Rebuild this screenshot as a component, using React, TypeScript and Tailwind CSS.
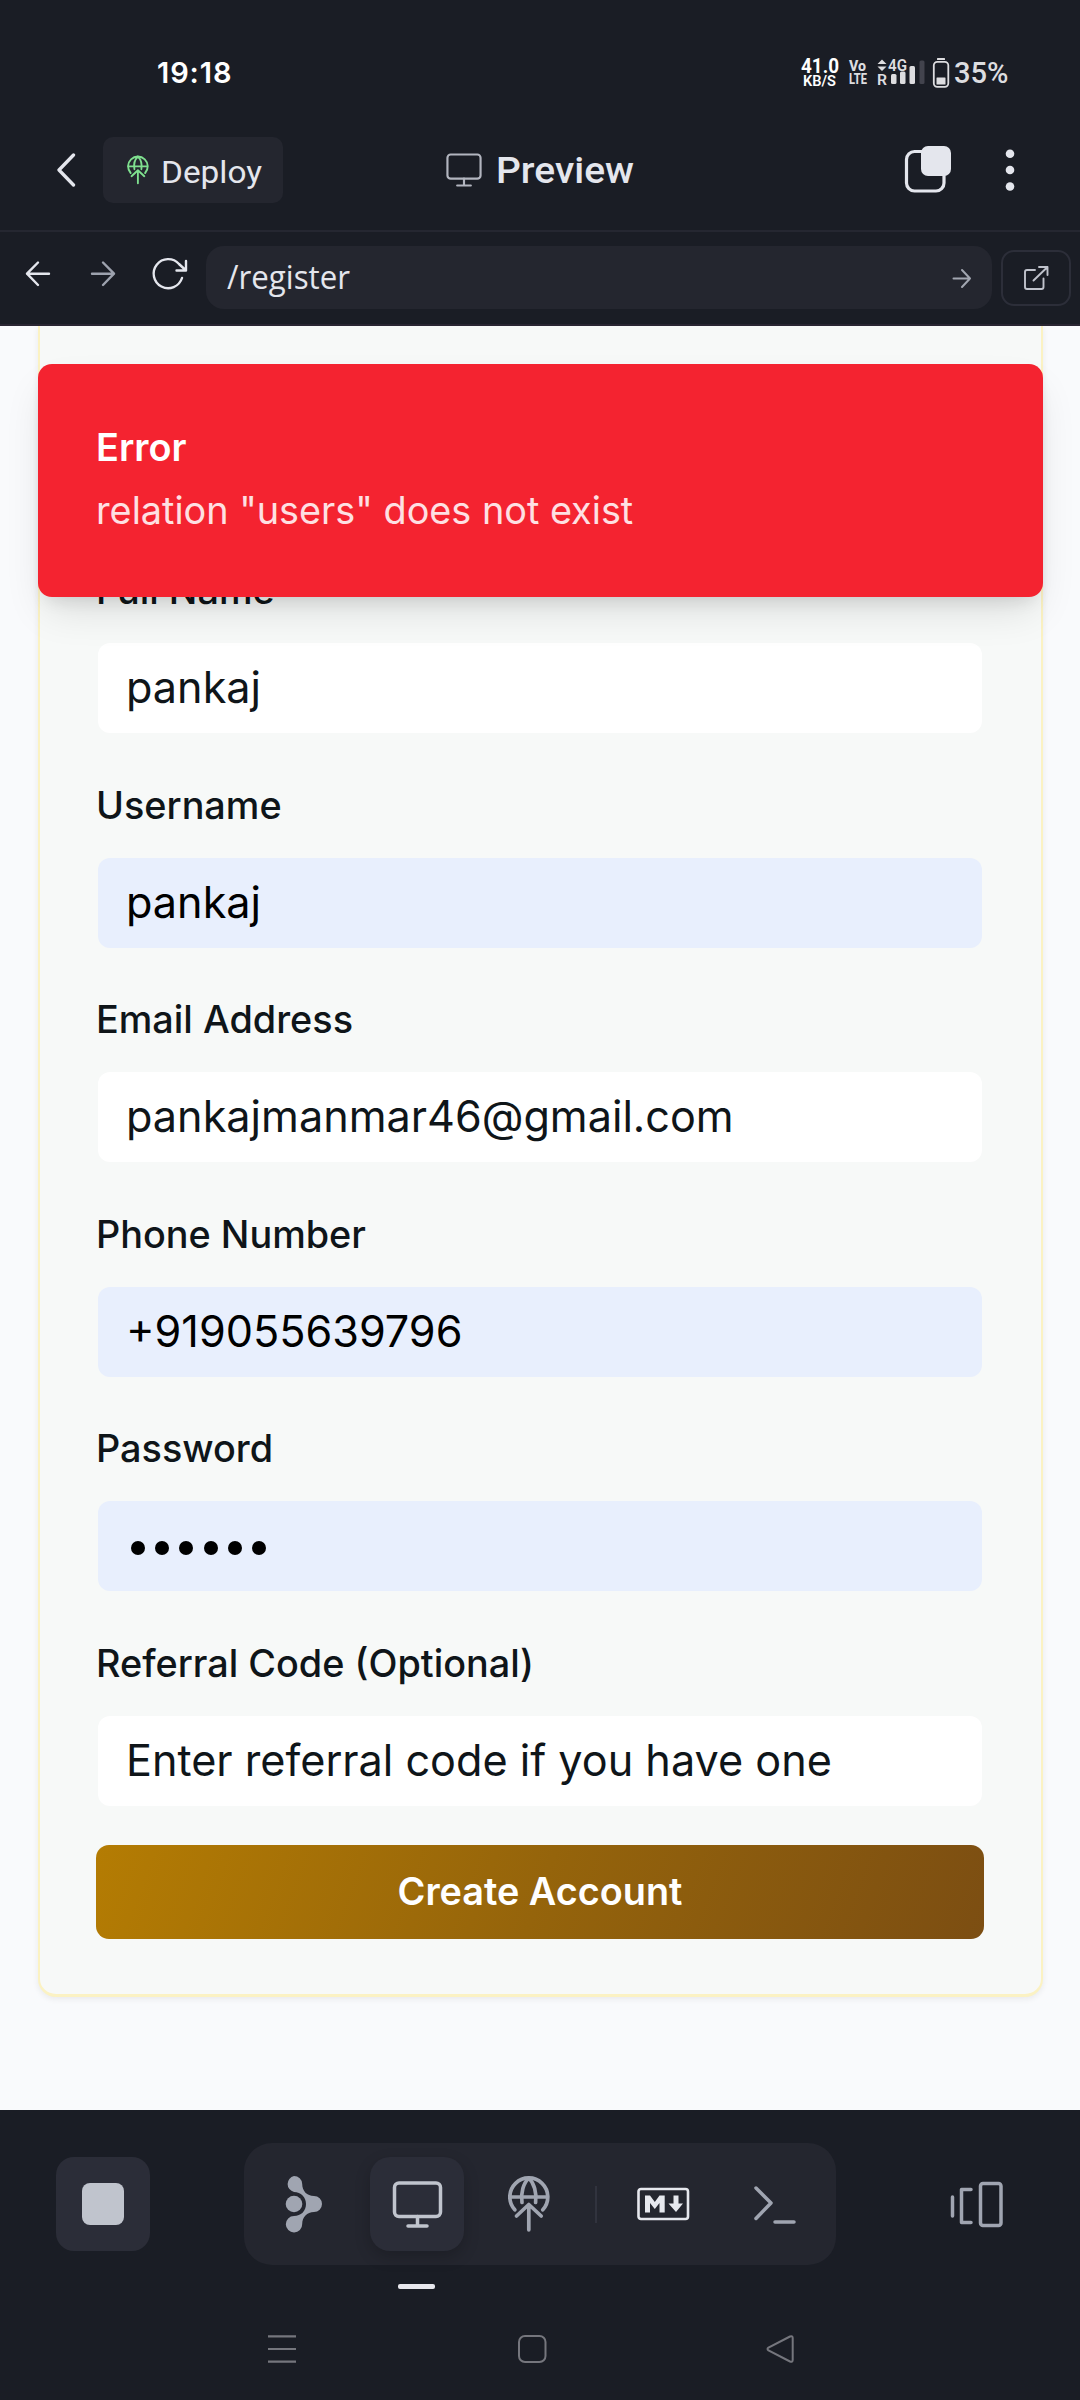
import React from "react";

const fields = [
  { label: "Full Name", value: "pankaj", fill: false },
  { label: "Username", value: "pankaj", fill: true },
  { label: "Email Address", value: "pankajmanmar46@gmail.com", fill: false },
  { label: "Phone Number", value: "+919055639796", fill: true },
  { label: "Password", value: "", fill: true },
  { label: "Referral Code (Optional)", value: "Enter referral code if you have one", fill: false },
];

function GlobeUp({ className, sw }: { className: string; sw: number }) {
  return (
    <svg className={className} viewBox="0 0 42 58" fill="none" stroke="currentColor" strokeWidth={sw} strokeLinecap="round" strokeLinejoin="round">
      <path d="M6.800 34.800A19 19 0 1 1 34.800 34.800" />
      <path d="M2.500 22H39" />
      <path d="M14 27.500C12.500 18 15.500 8 20.800 3C26 8 29 18 27.600 27.500" />
      <path d="M20.800 54.800V29.500M8.500 41L20.800 29.500L33.200 41" />
    </svg>
  );
}

function Monitor({ className, sw }: { className: string; sw: number }) {
  return (
    <svg className={className} viewBox="0 0 50 47" fill="none" stroke="currentColor" strokeWidth={sw} strokeLinecap="round" strokeLinejoin="round">
      <rect x="2" y="2" width="46" height="33.500" rx="4.500" />
      <path d="M25 35.500V45M15.500 45H34.500" />
    </svg>
  );
}

export default function App() {
  return (
    <div className="flex h-[2400px] w-[1080px] flex-col overflow-hidden bg-[#1a1d25] font-['Inter',sans-serif]">
      <div className="flex h-[92px] shrink-0 items-start pt-[53px] text-white">
        <span className="ml-[157px] w-[90px] text-[29px] leading-[39px] font-semibold tracking-[0.900px]">19:18</span>
        <svg className="ml-[553px] h-[36px] w-[215px] font-['Roboto',sans-serif]" viewBox="0 0 215 36">
          <g fill="#fff" fontWeight="700">
            <text x="1" y="20" fontSize="20" textLength="38" lengthAdjust="spacingAndGlyphs">41.0</text>
            <text x="3" y="33" fontSize="15.500" fontWeight="600" textLength="33" lengthAdjust="spacingAndGlyphs">KB/S</text>
          </g>
          <g fill="#dddde0" fontWeight="800">
            <text x="49" y="18" fontSize="15" textLength="17" lengthAdjust="spacingAndGlyphs">Vo</text>
            <text x="49" y="30.500" fontSize="15.500" textLength="18" lengthAdjust="spacingAndGlyphs">LTE</text>
            <text x="88" y="18" fontSize="16" fontWeight="600" textLength="19" lengthAdjust="spacingAndGlyphs">4G</text>
            <text x="77" y="32" fontSize="15" fontWeight="600" textLength="10" lengthAdjust="spacingAndGlyphs">R</text>
            <path d="M77.500 11L82 6.500L86.500 11ZM77.500 13.500L82 18L86.500 13.500Z" />
            <rect x="91" y="21" width="5.500" height="10" rx="1.500" />
            <rect x="100" y="18.500" width="5.500" height="12.500" rx="1.500" />
            <rect x="109.500" y="13" width="5.500" height="18" rx="1.500" />
            <rect x="119.500" y="7.500" width="5" height="23.500" rx="1.500" fill="#42434d" />
            <rect x="137" y="5" width="8" height="2" rx="0.500" />
            <rect x="133.800" y="8.800" width="14.500" height="25" rx="3.500" fill="none" stroke="#dddde0" strokeWidth="1.800" />
            <rect x="136.500" y="24.500" width="9" height="7" rx="0.500" />
          </g>
          <text x="154" y="29.500" fill="#dddde0" fontSize="29" fontWeight="500" textLength="54.500" lengthAdjust="spacingAndGlyphs">35%</text>
        </svg>
      </div>

      <div className="flex h-[140px] shrink-0 items-start border-b-2 border-[#252731] pt-[45px] text-[#e4e6ed]">
        <svg className="mt-[16px] ml-[56px] h-[34px] w-[20px]" viewBox="0 0 20 34" fill="none" stroke="currentColor" strokeWidth="3.300" strokeLinecap="round" strokeLinejoin="round">
          <path d="M17.500 2L3 17L17.500 32" />
        </svg>
        <div className="ml-[27px] flex h-[66px] w-[180px] items-center rounded-[10px] bg-[#24262f] pl-[24px]">
          <GlobeUp className="h-[30px] w-[22px] text-[#7fe08f]" sw={3.6} />
          <svg className="ml-[12px] h-[44px] w-[104px]" viewBox="0 0 104 44">
            <text x="0" y="34.500" fill="currentColor" fontFamily="Roboto, sans-serif" fontSize="31.500" textLength="101" lengthAdjust="spacingAndGlyphs">Deploy</text>
          </svg>
        </div>
        <Monitor className="mt-[16px] ml-[163px] h-[34px] w-[36px] text-[#b2b5bf]" sw={3} />
        <svg className="mt-[6px] ml-[15px] h-[50px] w-[140px]" viewBox="0 0 140 50">
          <text x="-1" y="40" fill="currentColor" fontFamily="Roboto, sans-serif" fontSize="36.500" fontWeight="500" textLength="138" lengthAdjust="spacingAndGlyphs">Preview</text>
        </svg>
        <svg className="mt-[7px] ml-[267px] h-[52px] w-[48px]" viewBox="0 0 48 52">
          <rect x="2.500" y="7.500" width="37.500" height="39.500" rx="8" fill="none" stroke="currentColor" strokeWidth="3.200" />
          <rect x="17" y="2" width="30" height="30" rx="7" fill="currentColor" />
        </svg>
        <svg className="mt-[12px] ml-[52px] h-[44px] w-[12px]" viewBox="0 0 12 44" fill="currentColor">
          <circle cx="6" cy="4.700" r="4.300" />
          <circle cx="6" cy="21" r="4.300" />
          <circle cx="6" cy="37.500" r="4.300" />
        </svg>
      </div>

      <div className="flex h-[94px] shrink-0 items-start border-b-2 border-[#292532] pt-[14px] text-[#e4e6ed]">
        <svg className="mt-[10px] h-[36px] w-[206px]" viewBox="0 0 206 36" fill="none" stroke="currentColor" strokeWidth="2.400" strokeLinecap="round" strokeLinejoin="round">
          <path d="M49 17.700H27M38 6.500L27 17.700L38 29" />
          <path d="M92 17.700H114M103 6.500L114 17.700L103 29" stroke="#9da2ae" />
          <path d="M182 22A14.500 14.500 0 1 1 179 8L186 14.500M186 5V14.500H176.500" />
        </svg>
        <div className="flex h-[63px] w-[786px] items-center justify-between rounded-[18px] bg-[#24262f] pr-[20px] pl-[20px]">
          <svg className="h-[50px] w-[130px]" viewBox="0 0 130 50">
            <text x="1" y="35.500" fill="currentColor" fontFamily="Open Sans, sans-serif" fontSize="32" textLength="123" lengthAdjust="spacingAndGlyphs">/register</text>
          </svg>
          <svg className="h-[22px] w-[20px]" viewBox="0 0 20 22" fill="none" stroke="#a2a6b1" strokeWidth="2" strokeLinecap="round" strokeLinejoin="round">
            <path d="M1.500 11.500H18M10 3L18 11.500L10 20" />
          </svg>
        </div>
        <div className="mt-[4px] ml-[9px] flex h-[56px] w-[70px] items-center justify-center rounded-[13px] border-2 border-[#2c2e39]">
          <svg className="h-[26px] w-[26px]" viewBox="0 0 26 26" fill="none" stroke="#c0c3cc" strokeWidth="1.900" strokeLinecap="round" strokeLinejoin="round">
            <path d="M12 5H4Q2 5 2 7V22Q2 24 4 24H18.500Q20.500 24 20.500 22V13.500M16 2H24.500V10M24.500 2L10.500 15.500" />
          </svg>
        </div>
      </div>

      <div className="relative h-[1784px] shrink-0 overflow-hidden bg-[#f9fafc]">
        <div className="mr-[37px] ml-[38px] h-[1671px] rounded-b-[18px] border-x-[2px] border-b-[3px] border-[#fbf2c3] bg-[#f7f9f8] pr-[57px] pl-[56px] pt-[237px] shadow-[0_2px_6px_rgba(0,0,0,0.07)]">
          {fields.map((f) => (
            <div key={f.label} className="flex h-[214.600px] flex-col text-[#0f1519]">
              <div className="h-[80px] pt-[2px] text-[37.800px] leading-[50px] font-medium">{f.label}</div>
              <div
                className={
                  f.fill
                    ? "mx-[2px] flex h-[90px] items-center rounded-[12px] bg-[#e8effd] pb-[2px] pl-[28px] text-[43.200px] text-black"
                    : "mx-[2px] flex h-[90px] items-center rounded-[12px] bg-white pb-[2px] pl-[28px] text-[43.200px]"
                }
              >
                {f.value ? (
                  <span className="leading-[56px]">{f.value}</span>
                ) : (
                  <div className="flex gap-[10.200px] pt-[6px] pl-[5px]">
                    {[0, 1, 2, 3, 4, 5].map((i) => (
                      <span key={i} className="h-[14px] w-[14px] rounded-full bg-black" />
                    ))}
                  </div>
                )}
              </div>
            </div>
          ))}
          <div className="-mt-[5.600px] flex h-[94px] items-center justify-center rounded-[13px] bg-linear-[110deg] from-[#b47c03] via-[#95640b] to-[#7c4e12] pb-[2px] text-[37.800px] font-semibold text-white">
            Create Account
          </div>
        </div>
        <div className="absolute top-[38px] left-[38px] h-[233px] w-[1005px] rounded-[14px] bg-[#f42330] pt-[56px] pl-[58px] shadow-[0_20px_42px_-8px_rgba(0,0,0,0.12),0_10px_18px_-8px_rgba(0,0,0,0.12)]">
          <div className="text-[37.800px] leading-[55px] font-semibold text-white">Error</div>
          <div className="mt-[8px] text-[37.800px] leading-[55px] text-[#fee0e3]">relation "users" does not exist</div>
        </div>
      </div>

      <div className="flex h-[180px] shrink-0 items-start pt-[33px]">
        <div className="mt-[14px] ml-[56px] flex h-[94px] w-[94px] items-center justify-center rounded-[18px] bg-[#2b2d38]">
          <div className="h-[42px] w-[42px] rounded-[8px] bg-[#c0c4cd]" />
        </div>
        <div className="ml-[94px] flex h-[122px] w-[592px] items-center rounded-[28px] bg-[#24262f] text-[#a0a5b1]">
          <svg className="ml-[41px] h-[58px] w-[38px]" viewBox="0 0 38 58" fill="currentColor">
            <circle cx="9" cy="29" r="8.300" />
            <path d="M9 1A8.200 8.200 0 0 1 17.200 9C17.200 16 22 21 29 21A8 8 0 0 1 29 37C22 37 17.200 42 17.200 49A8.200 8.200 0 1 1 9 41C16 41 21 36 21 29S16 17 9 17A8.200 8.200 0 0 1 9 1Z" />
          </svg>
          <div className="relative ml-[47px] flex h-[94px] w-[94px] items-center justify-center rounded-[20px] bg-[#2b2d38] text-[#c0c4cd] shadow-[0_6px_16px_rgba(0,0,0,0.2)]">
            <Monitor className="h-[47px] w-[51px]" sw={3.5} />
            <div className="absolute top-[127px] left-[28px] h-[5px] w-[37px] rounded-[2px] bg-[#e8e8ee]" />
          </div>
          <GlobeUp className="ml-[44px] h-[58px] w-[42px]" sw={3.7} />
          <div className="ml-[45px] h-[37px] w-[2px] bg-[#31333e]" />
          <svg className="ml-[40px] h-[34px] w-[53px]" viewBox="0 0 53 34" fill="#e6e8ee">
            <rect x="1.500" y="2" width="49.500" height="30" rx="2.500" fill="none" stroke="#e6e8ee" strokeWidth="2.600" />
            <path d="M8 25.500V8.500H13L17.800 15L22.500 8.500H27.700V25.500H22.500V16L17.800 22L13 16V25.500ZM36.500 8.500H41.500V16.500H46L39 25L31.500 16.500H36.500Z" />
          </svg>
          <svg className="ml-[63px] h-[42px] w-[44px]" viewBox="0 0 44 42" fill="none" stroke="currentColor" strokeWidth="3.500" strokeLinecap="round" strokeLinejoin="round">
            <path d="M3 5L18 20L3 35.500M22 39H41" />
          </svg>
        </div>
        <svg className="mt-[37px] ml-[113px] h-[48px] w-[56px]" viewBox="0 0 56 48" fill="none" stroke="#a0a5b1" strokeWidth="3.500" strokeLinecap="round" strokeLinejoin="round">
          <path d="M3.500 17V36M22 9.500H12.500V42.500H22" />
          <rect x="31.500" y="3.500" width="20.500" height="42" rx="2.500" />
        </svg>
      </div>

      <div className="flex h-[110px] shrink-0 items-start pt-[43px]">
        <svg className="ml-[268px] h-[32px] w-[28px]" viewBox="0 0 28 32" stroke="#75767d" strokeWidth="2.200">
          <path d="M0 3.300H28M0 16H28M0 28.700H28" />
        </svg>
        <svg className="ml-[221px] h-[32px] w-[32px]" viewBox="0 0 32 32" fill="none" stroke="#75767d" strokeWidth="2">
          <rect x="2" y="3" width="26.500" height="26" rx="6" />
        </svg>
        <svg className="ml-[216px] h-[32px] w-[32px]" viewBox="0 0 32 32" fill="none" stroke="#75767d" strokeWidth="2">
          <path d="M25 3.500L3.500 14.500Q1.500 16 3.500 17.500L25 28.500Q27.700 29.500 27.700 27V5Q27.700 2.500 25 3.500Z" />
        </svg>
      </div>
    </div>
  );
}
